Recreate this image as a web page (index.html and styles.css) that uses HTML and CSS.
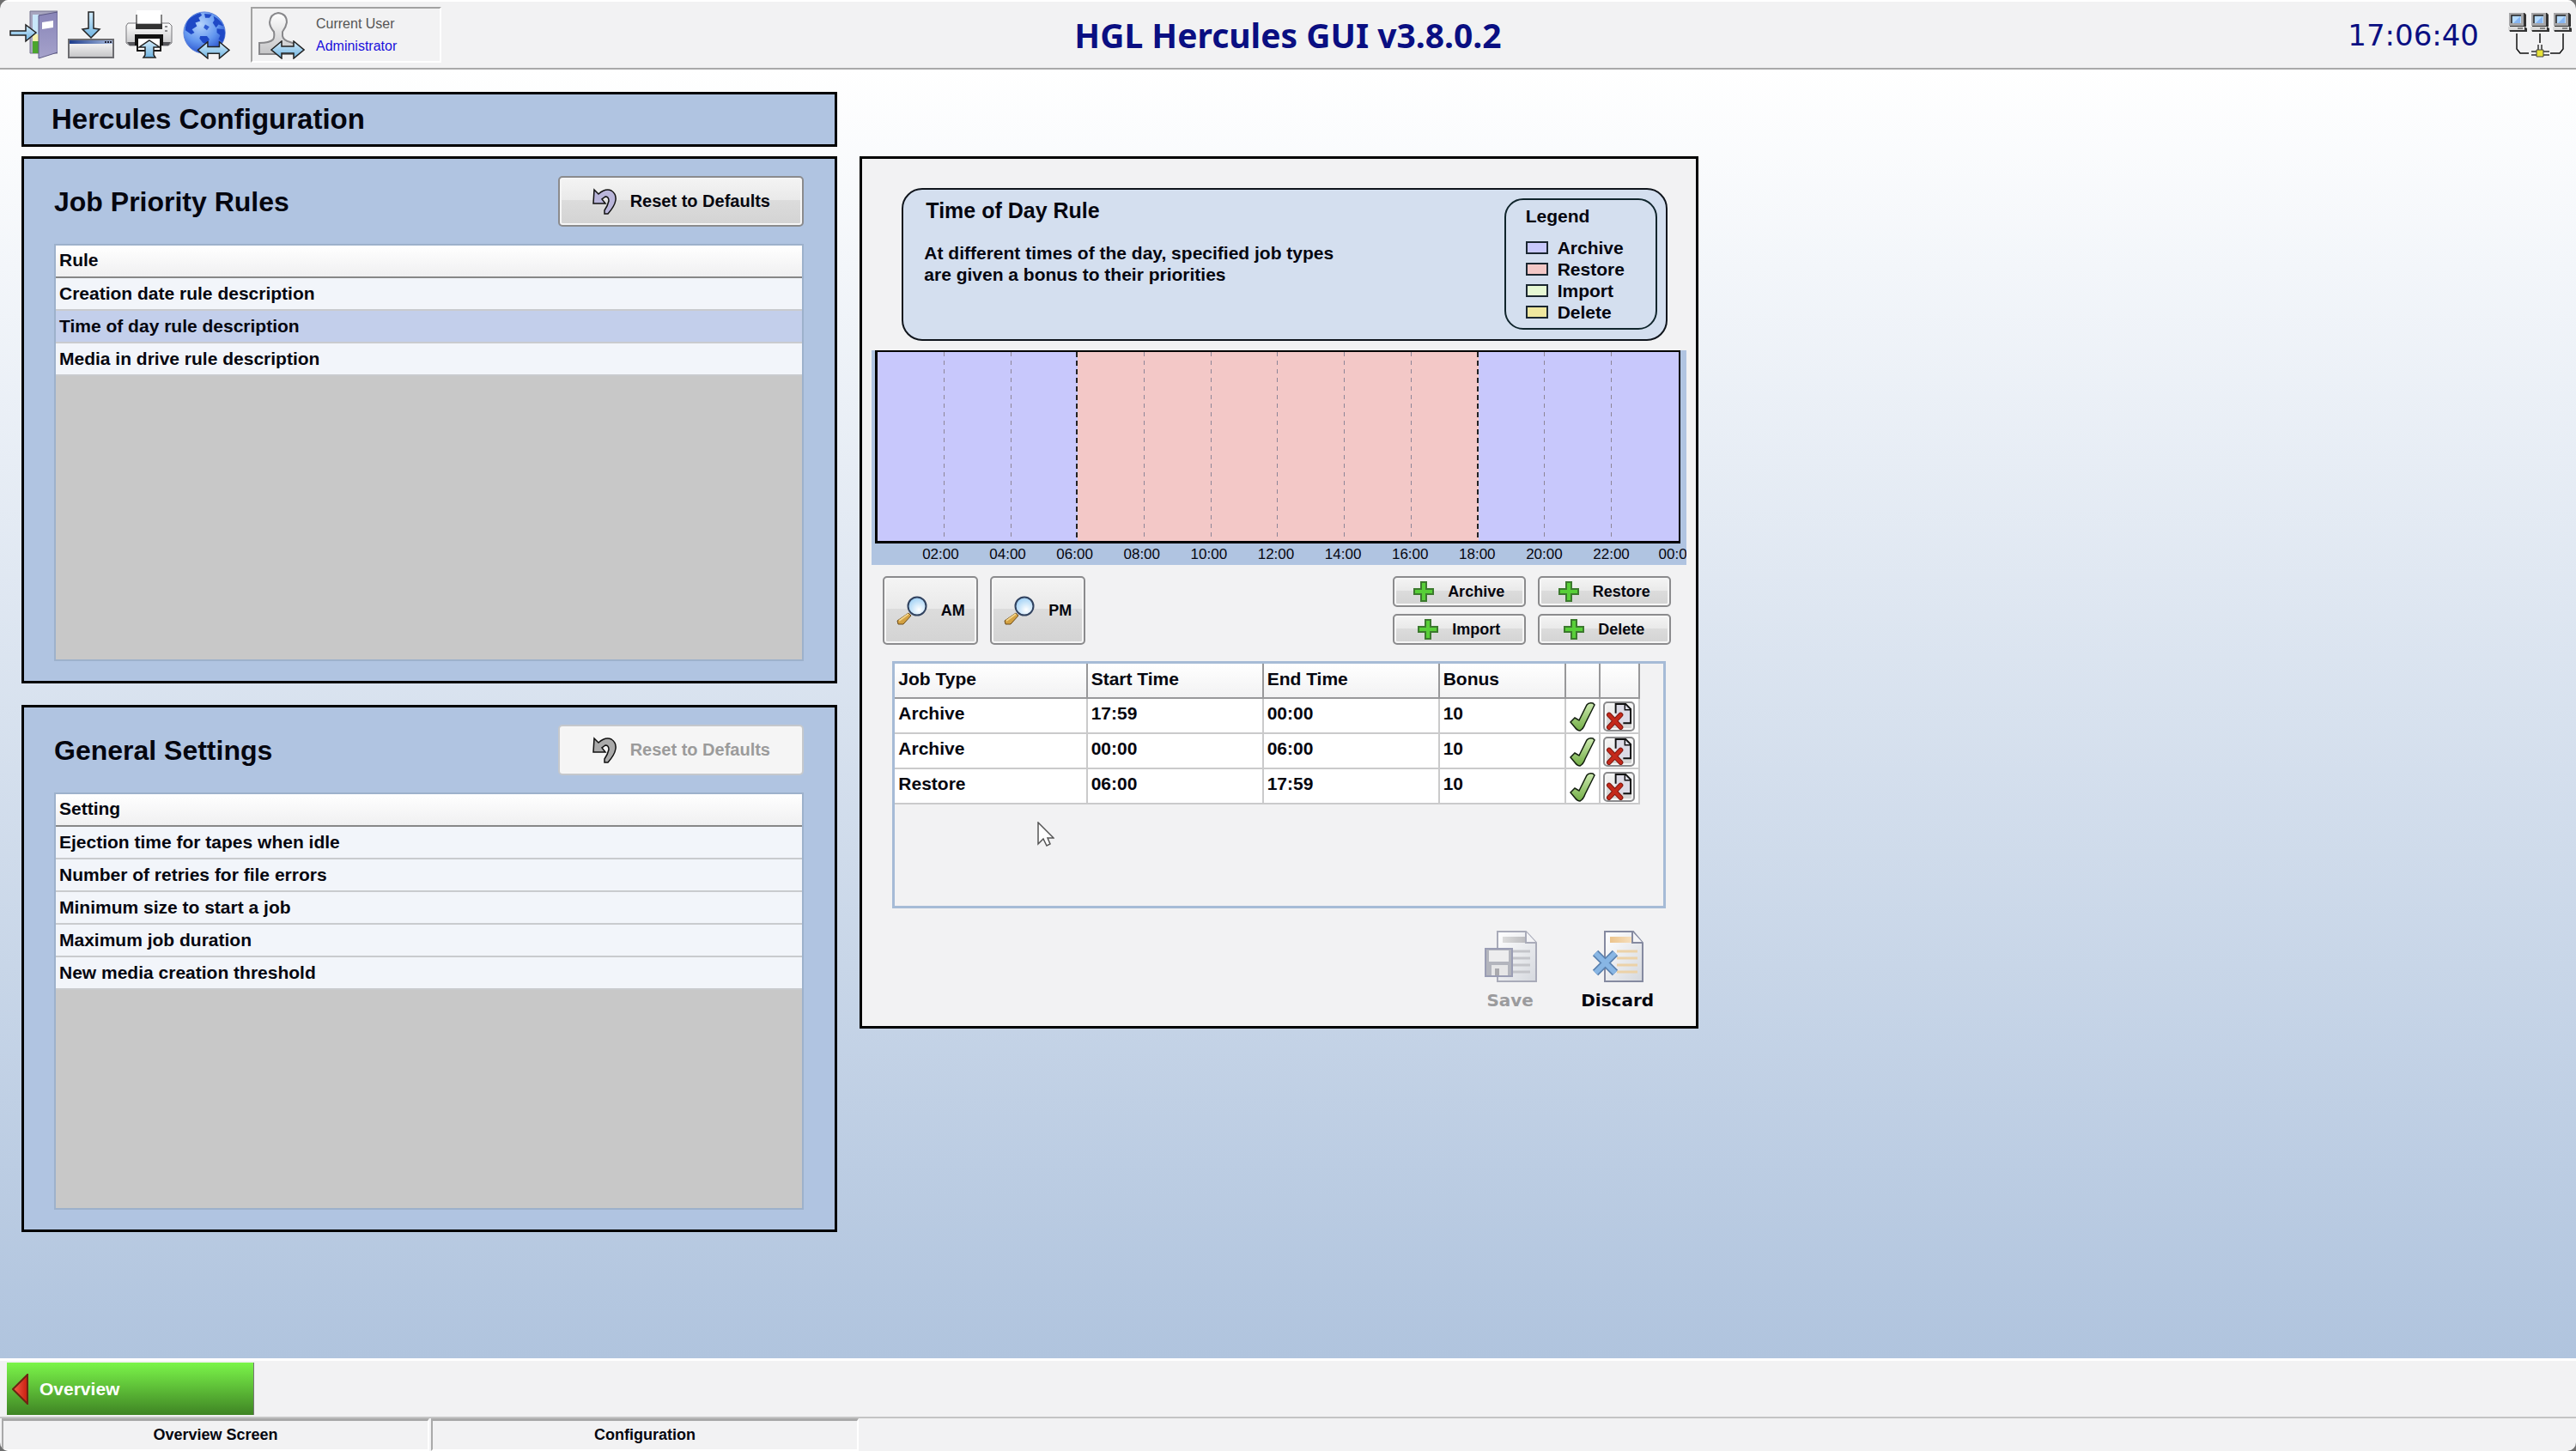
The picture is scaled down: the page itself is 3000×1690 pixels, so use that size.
FILE: index.html
```html
<!DOCTYPE html>
<html lang="en">
	<head>
		<meta charset="utf-8">
		<title>HGL Hercules GUI v3.8.0.2</title>
		<link rel="stylesheet" href="styles.css">
	</head>

	<body>
		<!-- shared gradients and repeated icons -->
		<svg class="defs" width="0" height="0" aria-hidden="true">
			<defs>
				<linearGradient id="gBlue" x1="0" y1="0" x2="0" y2="1"><stop offset="0" stop-color="#d3ecfb"/><stop offset="1" stop-color="#6db2e0"/></linearGradient>
				<linearGradient id="gDoor" x1="0" y1="0" x2="0" y2="1"><stop offset="0" stop-color="#8985b8"/><stop offset="1" stop-color="#a5a2cb"/></linearGradient>
				<linearGradient id="gGrey" x1="0" y1="0" x2="0" y2="1"><stop offset="0" stop-color="#fff"/><stop offset="1" stop-color="#c4c4c6"/></linearGradient>
				<linearGradient id="gTitle" x1="0" y1="0" x2="1" y2="0"><stop offset="0" stop-color="#1d3c8c"/><stop offset="1" stop-color="#a9bde0"/></linearGradient>
				<radialGradient id="gGlobe" cx=".4" cy=".3" r=".7"><stop offset="0" stop-color="#b5d3fb"/><stop offset=".6" stop-color="#6397ef"/><stop offset="1" stop-color="#2c55cf"/></radialGradient>
				<radialGradient id="gLens" cx=".6" cy=".7" r=".7"><stop offset="0" stop-color="#fff"/><stop offset="1" stop-color="#9fd0f5"/></radialGradient>
				<linearGradient id="gTick" x1="0" y1="0" x2="0" y2="1"><stop offset="0" stop-color="#cdeab0"/><stop offset="1" stop-color="#72ad45"/></linearGradient>
				<linearGradient id="gPage" x1="0" y1="0" x2="1" y2="1"><stop offset="0" stop-color="#fff"/><stop offset="1" stop-color="#d5d8de"/></linearGradient>
				<linearGradient id="gRed" x1="0" y1="0" x2="1" y2="0"><stop offset="0" stop-color="#f4604a"/><stop offset="1" stop-color="#c81e10"/></linearGradient>
				<linearGradient id="gGold" x1="0" y1="0" x2="1" y2="0"><stop offset="0" stop-color="#ecc48c"/><stop offset="1" stop-color="#f6dfbd"/></linearGradient>
				<linearGradient id="gBar" x1="0" y1="0" x2="1" y2="0"><stop offset="0" stop-color="#dcdcdc"/><stop offset="1" stop-color="#bdbdc0"/></linearGradient>
			</defs>
			<symbol id="swap" viewBox="0 0 40 22">
				<path d="M1 11L13 1V7H27V1L39 11L27 21V15H13V21Z" fill="url(#gBlue)" stroke="#222" stroke-width="1.5"/>
			</symbol>
			<symbol id="undo" viewBox="0 0 28 32">
				<path d="M2 2L7 7Q15 0 22 3Q28 7 27 14Q26 21 18 30H14V26Q18 20 19 15Q19 10 15 10L11 13L15 18H1Z" fill="currentColor" stroke="#111" stroke-width="1.5"/>
			</symbol>
			<symbol id="lens" viewBox="0 0 36 34">
				<path d="M14 20L17 23L8 33H2L1 29Z" fill="#d3a142" stroke="#6b4b1a"/>
				<path d="M3 29L14 21" stroke="#f3d48a" stroke-width="2"/>
				<circle cx="24" cy="12" r="10.5" fill="url(#gLens)" stroke="#31425f" stroke-width="2"/>
			</symbol>
			<symbol id="plus" viewBox="0 0 24 24">
				<path d="M9 1H15V9H23V15H15V23H9V15H1V9H9Z" fill="#58cf38" stroke="#3c7a2e" stroke-width="2"/>
			</symbol>
			<symbol id="tick" viewBox="0 0 30 34">
				<path d="M1 23L6 18L11 21L20 3Q22 0 27 1L29 3L18 25Q16 31 12 33Q9 33 6 29Z" fill="url(#gTick)" stroke="#142010" stroke-width="1.5"/>
			</symbol>
			<symbol id="remove" viewBox="0 0 32 32">
				<path d="M12 1H24L30 7V24H12Z" fill="#dcdbe6"/>
				<path d="M12 12V1H24L30 7V24H21" fill="none" stroke="#111" stroke-width="2"/>
				<path d="M23 1V8H30" fill="none" stroke="#111" stroke-width="1.5"/>
				<path d="M4 14L18 29M18 14L4 29" stroke="#7d1710" stroke-width="6" stroke-linecap="round"/>
				<path d="M4 14L18 29M18 14L4 29" stroke="#c4291b" stroke-width="4" stroke-linecap="round"/>
			</symbol>
			<symbol id="pc" viewBox="0 0 22 24">
				<path d="M2 1H19L21 3V17H19V18H2Z" fill="#333"/>
				<path d="M1 1H18V16H1Z" fill="#a6a6a8"/>
				<path d="M4 4H15V13H4Z" fill="#b7dcff"/>
				<path d="M4 13V4H15" fill="none" stroke="#222" stroke-width="1.5"/>
				<path d="M6 13L14 5V13Z" fill="#86b5f2"/>
				<path d="M0 17H19L22 19V23H2Z" fill="#333"/>
				<path d="M0 17H19V21H0Z" fill="#dadada"/>
				<path d="M11 19H17" stroke="#333"/>
			</symbol>
		</svg>

		<div class="window">
			<header class="toolbar">
				<div class="tools">
					<button class="tool" type="button" aria-label="Log out">
						<svg viewBox="0 0 56 58">
							<path d="M24 1H56V50H24Z" fill="#a7a5bf" stroke="#77758f"/>
							<path d="M27 5H34V50H27Z" fill="#c9e6fa"/>
							<path d="M27 28H34V36H27Z" fill="#f5f2ae"/>
							<path d="M27 36H34V50H27Z" fill="#4ba52d"/>
							<path d="M34 6L56 2V49L34 56Z" fill="url(#gDoor)" stroke="#5d5a86"/>
							<path d="M38 14L51 12V20L38 22Z" fill="#fff"/>
							<path d="M1 24H19V17L31 26L19 36V29H1Z" fill="url(#gBlue)" stroke="#222" stroke-width="1.5"/>
						</svg>
					</button>
					<button class="tool" type="button" aria-label="Minimize">
						<svg viewBox="0 0 56 58">
							<path d="M2 34H54V55H2Z" fill="url(#gGrey)" stroke="#6c6c70" stroke-width="2"/>
							<path d="M3 35H53V39H3Z" fill="url(#gTitle)"/>
							<path d="M44 37H52" stroke="#223" stroke-width="2" stroke-dasharray="2 1"/>
							<path d="M25 2H31V21L38 22L28 32L18 22L25 21Z" fill="url(#gBlue)" stroke="#222" stroke-width="1.5"/>
						</svg>
					</button>
					<button class="tool" type="button" aria-label="Print">
						<svg viewBox="0 0 56 58">
							<path d="M4 15H52L55 18V38L51 41H6L2 38V18Z" fill="url(#gGrey)" stroke="#77777a"/>
							<path d="M3 37H54L51 41H6Z" fill="#55555a"/>
							<path d="M13 16H44V22H13Z" fill="#333"/>
							<path d="M14 0H43V15H14Z" fill="#fff"/>
							<path d="M14 5V16M43 5V16" stroke="#111"/>
							<path d="M12 28H45V41H43V48H14V41H12Z" fill="#111"/>
							<path d="M16 33H41V46H16Z" fill="#fff"/>
							<path d="M47 19H50M47 24H50" stroke="#8a8a8d" stroke-width="2"/>
							<path d="M29 35L41 43H34V52L36 55H22L24 52V43H17Z" fill="url(#gBlue)" stroke="#222" stroke-width="1.5"/>
						</svg>
					</button>
					<button class="tool" type="button" aria-label="Network exchange">
						<svg viewBox="0 0 58 58">
							<circle cx="27" cy="26" r="25" fill="url(#gGlobe)" stroke="#5a7fd8"/>
							<path d="M8 10Q14 4 22 2L24 5L20 8L22 12L16 14L18 18L12 22L15 26L11 28L4 23Q4 15 8 10Z" fill="#1f49c6"/>
							<path d="M27 3L36 4L33 8L28 8ZM38 6Q46 10 50 18L44 16L41 20L37 14L39 11Z" fill="#1f49c6"/>
							<path d="M22 30L30 30L33 34L30 40L25 38L21 33Z" fill="#1f49c6"/>
							<path d="M42 21L51 22Q53 30 49 37L44 34L46 29L42 26Z" fill="#1f49c6"/>
							<path d="M28 16L33 19L30 23L26 20Z" fill="#2e5ad2"/>
							<use href="#swap" x="18" y="36" width="40" height="22"/>
						</svg>
					</button>
					<div class="user">
						<svg class="user-icon" viewBox="0 0 56 58">
							<path d="M24 3Q34 4 34 14Q33 20 29 25V30Q30 35 38 37Q46 39 46 46V51H2V38Q14 38 18 34Q20 31 19 25Q14 19 14 14Q15 4 24 3Z" fill="url(#gGrey)" stroke="#88888b" stroke-width="2"/>
							<use href="#swap" x="15" y="35" width="40" height="22"/>
						</svg>
						<div>
							<div>Current User</div>
							<div class="user-name">Administrator</div>
						</div>
					</div>
				</div>
				<h1>HGL Hercules GUI v3.8.0.2</h1>
				<div class="status">
					<time class="clock">17:06:40</time>
					<svg class="net" viewBox="0 0 74 54">
						<use href="#pc" x="0" y="0" width="22" height="24"/>
						<use href="#pc" x="26" y="0" width="22" height="24"/>
						<use href="#pc" x="52" y="0" width="22" height="24"/>
						<path d="M10 25V43L14 48H24M64 25V43L60 48H49M37 25V36" fill="none" stroke="#111" stroke-width="1.5"/>
						<path d="M27 46H48M27 50H48M35 38V46M39 38V46" stroke="#333" stroke-width="1.5"/>
						<path d="M33 44H41V52H33Z" fill="#e8e337" stroke="#444"/>
					</svg>
				</div>
			</header>

			<main class="content">
				<h2 class="page-title">Hercules Configuration</h2>

				<div class="lists">
					<section class="panel">
						<div class="panel-head">
							<h2>Job Priority Rules</h2>
							<button class="btn reset" type="button"><svg class="undo"><use href="#undo"/></svg>Reset to Defaults</button>
						</div>
						<div class="list">
							<table>
								<thead>
									<tr><th>Rule</th></tr>
								</thead>
								<tbody>
									<tr><td>Creation date rule description</td></tr>
									<tr class="selected"><td>Time of day rule description</td></tr>
									<tr><td>Media in drive rule description</td></tr>
								</tbody>
							</table>
						</div>
					</section>

					<section class="panel">
						<div class="panel-head">
							<h2>General Settings</h2>
							<button class="btn reset" type="button" disabled><svg class="undo"><use href="#undo"/></svg>Reset to Defaults</button>
						</div>
						<div class="list">
							<table>
								<thead>
									<tr><th>Setting</th></tr>
								</thead>
								<tbody>
									<tr><td>Ejection time for tapes when idle</td></tr>
									<tr><td>Number of retries for file errors</td></tr>
									<tr><td>Minimum size to start a job</td></tr>
									<tr><td>Maximum job duration</td></tr>
									<tr><td>New media creation threshold</td></tr>
								</tbody>
							</table>
						</div>
					</section>
				</div>

				<section class="editor">
					<div class="info">
						<div>
							<h3>Time of Day Rule</h3>
							<p>At different times of the day, specified job types<br>are given a bonus to their priorities</p>
						</div>
						<div class="legend">
							<h4>Legend</h4>
							<ul>
								<li><span class="swatch archive"></span>Archive</li>
								<li><span class="swatch restore"></span>Restore</li>
								<li><span class="swatch import"></span>Import</li>
								<li><span class="swatch delete"></span>Delete</li>
							</ul>
						</div>
					</div>

					<!-- one cell per two hours -->
					<div class="chart">
						<div class="plot">
							<span class="archive"></span><span class="archive"></span><span class="archive edge"></span>
							<span class="restore"></span><span class="restore"></span><span class="restore"></span>
							<span class="restore"></span><span class="restore"></span><span class="restore edge"></span>
							<span class="archive"></span><span class="archive"></span><span class="archive last"></span>
						</div>
						<div class="hours">
							<span>02:00</span><span>04:00</span><span>06:00</span><span>08:00</span>
							<span>10:00</span><span>12:00</span><span>14:00</span><span>16:00</span>
							<span>18:00</span><span>20:00</span><span>22:00</span><span class="end">00:0</span>
						</div>
					</div>

					<div class="actions">
						<div class="zooms">
							<button class="btn zoom" type="button"><svg class="lens"><use href="#lens"/></svg>AM</button>
							<button class="btn zoom" type="button"><svg class="lens"><use href="#lens"/></svg>PM</button>
						</div>
						<div class="adds">
							<button class="btn add" type="button"><svg class="plus"><use href="#plus"/></svg>Archive</button>
							<button class="btn add" type="button"><svg class="plus"><use href="#plus"/></svg>Restore</button>
							<button class="btn add" type="button"><svg class="plus"><use href="#plus"/></svg>Import</button>
							<button class="btn add" type="button"><svg class="plus"><use href="#plus"/></svg>Delete</button>
						</div>
					</div>

					<div class="jobs">
						<table>
							<colgroup>
								<col><col class="c-time"><col class="c-time"><col class="c-bonus"><col class="c-ok"><col class="c-del">
							</colgroup>
							<thead>
								<tr><th>Job Type</th><th>Start Time</th><th>End Time</th><th>Bonus</th><th></th><th></th></tr>
							</thead>
							<tbody>
								<tr>
									<td>Archive</td><td>17:59</td><td>00:00</td><td>10</td>
									<td class="icon"><svg class="tick"><use href="#tick"/></svg></td>
									<td class="icon"><button class="btn del" type="button" aria-label="Remove"><svg><use href="#remove"/></svg></button></td>
								</tr>
								<tr>
									<td>Archive</td><td>00:00</td><td>06:00</td><td>10</td>
									<td class="icon"><svg class="tick"><use href="#tick"/></svg></td>
									<td class="icon"><button class="btn del" type="button" aria-label="Remove"><svg><use href="#remove"/></svg></button></td>
								</tr>
								<tr>
									<td>Restore</td><td>06:00</td><td>17:59</td><td>10</td>
									<td class="icon"><svg class="tick"><use href="#tick"/></svg></td>
									<td class="icon"><button class="btn del" type="button" aria-label="Remove"><svg><use href="#remove"/></svg></button></td>
								</tr>
							</tbody>
						</table>
						<svg class="pointer" viewBox="0 0 20 30">
							<path d="M1 1V26L7 20L11 28L15 26L12 19H19Z" fill="#fff" stroke="#555" stroke-width="1.5"/>
						</svg>
					</div>

					<div class="commit">
						<button type="button" disabled>
							<svg viewBox="0 0 62 60">
								<path d="M16 1H49L61 14V59H16Z" fill="url(#gPage)" stroke="#a9abb9" stroke-width="2"/>
								<path d="M49 1V14H61" fill="#f4f4f6" stroke="#a9abb9" stroke-width="2"/>
								<path d="M22 7H48V14H22Z" fill="url(#gBar)"/>
								<path d="M30 24H54M34 32H54M34 40H54M34 48H54" stroke="#c4c5ca" stroke-width="3"/>
								<path d="M2 21H33V53H2Z" fill="#b3b5bd" stroke="#9a9db4" stroke-width="2"/>
								<path d="M6 23H29V36H6Z" fill="#ededee"/>
								<path d="M9 40H28V52H9Z" fill="#e6e6e7"/>
								<path d="M13 44H18V52H13Z" fill="#a9a9ad"/>
							</svg>
							Save
						</button>
						<button type="button">
							<svg viewBox="0 0 62 60">
								<path d="M16 1H49L60 14V59H16Z" fill="url(#gPage)" stroke="#858aa0" stroke-width="2"/>
								<path d="M48 1V14H60" fill="#f4f4f6" stroke="#858aa0" stroke-width="2"/>
								<path d="M22 7H47V14H22Z" fill="url(#gGold)"/>
								<path d="M30 24H54M30 32H54M30 40H54M30 48H54" stroke="#ecd2a8" stroke-width="3"/>
								<path d="M5 26L28 49M28 26L5 49" stroke="#587fae" stroke-width="9"/>
								<path d="M5 26L28 49M28 26L5 49" stroke="#88b6e4" stroke-width="6"/>
							</svg>
							Discard
						</button>
					</div>
				</section>
			</main>

			<footer class="footer">
				<nav class="nav">
					<button class="overview" type="button">
						<svg viewBox="0 0 20 36"><path d="M18 1V35L1 18Z" fill="url(#gRed)" stroke="#6d2513" stroke-width="2"/></svg>
						Overview
					</button>
				</nav>
				<div class="crumbs">
					<div>Overview Screen</div>
					<div>Configuration</div>
				</div>
			</footer>
		</div>
	</body>
</html>
```

FILE: styles.css
```css
* {
	box-sizing: border-box
}
html {
	background: #6f6f6f
}
body {
	margin: 0;
	color: #05060f;
	font: bold 21px/25px "Liberation Sans", Arial, sans-serif
}
h1, h2, h3, h4, p, ul {
	margin: 0;
	padding: 0
}
button {
	margin: 0;
	color: inherit;
	font: inherit
}
svg {
	display: block;
	flex: none
}
table {
	border-collapse: collapse;
	table-layout: fixed;
	width: 100%
}
th, td {
	padding: 0 4px;
	text-align: left
}
.defs {
	position: absolute
}
.window {
	display: flex;
	flex-direction: column;
	min-height: 100vh;
	overflow: hidden;
	border-radius: 10px;
	background: #f2f2f3
}

/* top bar */
.toolbar {
	display: grid;
	grid-template-columns: 1fr auto 1fr;
	align-items: center;
	height: 81px;
	padding: 0 5px;
	border-top: 2px solid #fff;
	border-bottom: 2px solid #a9a9a9
}
.toolbar h1 {
	color: #0a0f82;
	font: bold 39px/50px "Noto Sans", sans-serif
}
.tools {
	display: flex;
	align-items: center;
	gap: 11px;
	padding-left: 6px
}
.tool {
	padding: 0;
	border: 0;
	background: none
}
.tool svg, .user-icon {
	width: 56px;
	height: 58px
}
.user {
	display: flex;
	align-items: center;
	gap: 12px;
	width: 222px;
	height: 65px;
	margin-left: 13px;
	padding-left: 6px;
	border: 2px solid #fff;
	border-top-color: #a2a2a2;
	border-left-color: #a2a2a2;
	color: #555;
	font-weight: normal;
	font-size: 16px;
	line-height: 26px
}
.user-name {
	color: #1a10dc
}
.status {
	display: flex;
	justify-content: flex-end;
	align-items: center;
	gap: 34px
}
.clock {
	color: #0a0f82;
	font: 34px/40px "DejaVu Sans", sans-serif
}
.net {
	width: 74px;
	height: 54px
}

/* work area */
.content {
	flex: 1;
	display: grid;
	grid-template-columns: 950fr 976fr 996fr;
	grid-template-rows: auto 1fr;
	gap: 11px 26px;
	align-items: start;
	padding: 26px 0 25px 25px;
	background: linear-gradient(#fff, #b0c4de)
}
.page-title, .panel {
	border: 3px solid #000;
	background: #b0c4e1
}
.page-title {
	padding: 9px 32px;
	font-size: 33px;
	line-height: 40px
}
.lists {
	grid-column: 1;
	display: grid;
	gap: 25px
}
.panel {
	padding: 20px 36px 23px 35px
}
.panel-head {
	display: flex;
	justify-content: space-between;
	align-items: center;
	margin-bottom: 20px
}
.panel-head h2 {
	font-size: 32px;
	line-height: 40px
}
.btn {
	display: flex;
	justify-content: center;
	align-items: center;
	gap: 16px;
	padding: 0;
	border: 2px solid #8b8b8d;
	border-radius: 5px;
	background: linear-gradient(#f4f4f4, #e9e9e9 48%, #dcdcdc 48%, #d3d3d3);
	box-shadow: inset 0 0 0 2px #f6f6f6
}
.btn:disabled {
	border-color: #c5c8cc;
	background: #f5f5f5;
	color: #9b9b9b
}
.reset {
	width: 286px;
	height: 59px;
	font-size: 20px
}
.undo {
	width: 28px;
	height: 32px;
	color: #b9b5da
}
.btn:disabled .undo {
	color: #aaa
}
.list {
	min-height: 486px;
	border: 2px solid #9db1cb;
	background: #c8c8c8
}
.list th {
	height: 37px;
	padding-bottom: 3px;
	border-bottom: 2px solid #878787;
	background: linear-gradient(#fff, #f0f0f1)
}
.list td {
	height: 38px;
	padding-bottom: 2px;
	border-bottom: 2px solid #c9cbce;
	background: #f2f5fa
}
.list .selected td {
	background: #c3cfeb
}

/* rule editor */
.editor {
	grid-column: 2;
	padding: 34px 11px 17px;
	border: 3px solid #000;
	background: #f2f2f3
}
.info {
	display: flex;
	justify-content: space-between;
	margin: 0 22px 11px 35px;
	padding: 10px 10px 11px 24px;
	border: 2px solid #10151c;
	border-radius: 24px;
	background: #d4dfef
}
.info h3 {
	margin: 2px 0 24px 2px;
	font-size: 25px
}
.legend {
	width: 178px;
	padding: 6px 0 6px 23px;
	border: 2px solid #10252c;
	border-radius: 22px
}
.legend h4 {
	margin-bottom: 12px;
	font-size: 21px
}
.legend ul {
	list-style: none
}
.legend li {
	display: flex;
	align-items: center;
	gap: 11px
}
.swatch {
	width: 26px;
	height: 15px;
	border: 2px solid #1a2630
}
.archive {
	background-color: #c8c8fc
}
.restore {
	background-color: #f3c8c7
}
.import {
	background-color: #e6f8d4
}
.delete {
	background-color: #efe79f
}
.chart {
	overflow: hidden;
	padding: 0 7px 0 4px;
	background: #b0c4e1
}
.plot {
	display: grid;
	grid-template-columns: repeat(12, 1fr);
	height: 225px;
	border: solid #000;
	border-width: 2px 2px 3px 3px
}
.plot span {
	background-image: repeating-linear-gradient(#8d8597 0 5px, transparent 5px 10px);
	background-position: right;
	background-repeat: no-repeat;
	background-size: 1px 100%
}
.plot .edge {
	background-image: repeating-linear-gradient(#222 0 6px, transparent 6px 10px);
	background-size: 2px 100%
}
.plot .last {
	background-image: none
}
.hours {
	display: grid;
	grid-template-columns: repeat(12, 1fr);
	width: 100%;
	margin-left: calc(100% / 24 - 2px);
	font-size: 17px;
	font-weight: normal;
	text-align: center
}
.hours .end {
	padding-left: 16px;
	text-align: left
}
.actions {
	display: flex;
	justify-content: space-between;
	padding: 13px 18px 0 13px;
	font-size: 18px
}
.zooms {
	display: flex;
	gap: 14px
}
.zoom {
	width: 111px;
	height: 80px
}
.lens {
	width: 36px;
	height: 34px
}
.adds {
	display: grid;
	grid-template-columns: 155px 155px;
	gap: 8px 14px
}
.plus {
	width: 24px;
	height: 24px
}
.jobs {
	position: relative;
	min-height: 288px;
	margin: 19px 24px 26px;
	padding-right: 27px;
	border: 3px solid #a6bbd6
}
.jobs th {
	height: 40px;
	padding-bottom: 5px;
	border: 2px solid #98989a;
	border-top: 0;
	border-left: 0;
	background: linear-gradient(#fff, #f2f2f3)
}
.jobs td {
	height: 41px;
	padding-bottom: 7px;
	border: 2px solid #cacacb;
	border-top: 0;
	border-left: 0;
	background: #fff
}
.jobs .icon {
	padding: 2px 0 0
}
.c-time {
	width: 205px
}
.c-bonus {
	width: 147px
}
.c-ok {
	width: 40px
}
.c-del {
	width: 46px
}
.tick {
	width: 30px;
	height: 34px;
	margin: auto
}
.del {
	width: 37px;
	height: 35px;
	margin: auto
}
.del svg {
	width: 31px;
	height: 31px
}
.pointer {
	position: absolute;
	left: 166px;
	top: 184px;
	width: 20px;
	height: 30px
}
.commit {
	display: flex;
	justify-content: flex-end;
	gap: 25px;
	padding-right: 30px
}
.commit button {
	display: flex;
	flex-direction: column;
	align-items: center;
	gap: 8px;
	width: 100px;
	padding: 0;
	border: 0;
	background: none;
	font: bold 20px/26px "DejaVu Sans", sans-serif
}
.commit button:disabled {
	color: #9b9b9d
}
.commit svg {
	width: 62px;
	height: 60px
}

/* bottom bars */
.nav {
	padding: 2px 8px;
	border-top: 3px solid #fff
}
.overview {
	display: flex;
	align-items: center;
	gap: 12px;
	width: 288px;
	height: 61px;
	padding: 0 6px;
	border: 0;
	border-right: 1px solid #777;
	background: linear-gradient(#7bf54a, #3f8424);
	color: #fff
}
.overview svg {
	width: 20px;
	height: 36px
}
.crumbs {
	display: flex;
	gap: 2px;
	padding-left: 2px;
	border-top: 2px solid #c4c4c4;
	font-size: 18px;
	text-align: center
}
.crumbs div {
	width: 498px;
	padding: 4px 0 4px;
	border: 2px solid #fff;
	border-top: 3px solid #a9a9a9;
	border-left: 2px solid #a9a9a9
}
```
